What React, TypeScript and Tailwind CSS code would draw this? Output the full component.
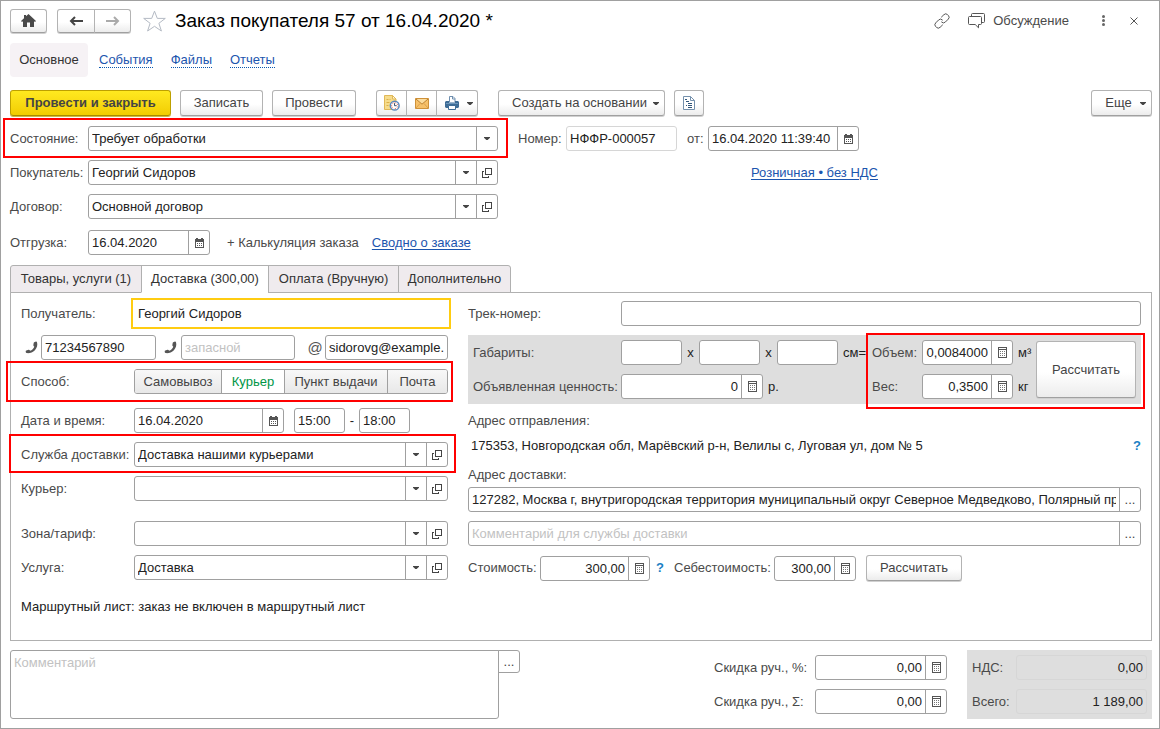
import { useId } from "react";
import type { ReactNode } from "react";

const BUTTON =
  "flex items-center justify-center rounded-[3px] border border-[#b3b3b3] border-b-[#a0a0a0] bg-linear-to-b from-white from-55% to-[#ececec] text-[#444] shadow-[0_1px_0_#d0d0d0]";
const CELL = "flex shrink-0 items-center justify-center text-[#444]";
const VALUE = "h-full w-full min-w-0 bg-transparent px-[3px] text-[#222] outline-none placeholder:text-[#c2c2c2]";

function Caret() {
  return (
    <svg width="6" height="3" viewBox="0 0 6 3" fill="currentColor" aria-hidden="true">
      <path d="M0 0h6v.8L3.600 3H2.400L0 .8z" />
    </svg>
  );
}

function OpenIcon() {
  return (
    <svg width="10" height="10" viewBox="0 0 10 10" fill="none" stroke="currentColor" shapeRendering="crispEdges" aria-hidden="true">
      <path d="M3.500 .5h6v6h-6zM2 3.500H.5v6h6V8" />
    </svg>
  );
}

function CalendarIcon() {
  return (
    <svg width="9" height="10" viewBox="0 0 9 10" shapeRendering="crispEdges" aria-hidden="true">
      <path fill="#555" d="M1 0h2v1h3V0h2v1h1v9H0V1h1z" />
      <path fill="#fff" d="M1 4h7v5H1z" />
      <path stroke="#555" strokeDasharray="1 1" d="M2 5.500h6M2 7.500h6" />
    </svg>
  );
}

function CalcIcon() {
  return (
    <svg width="9" height="11" viewBox="0 0 9 11" shapeRendering="crispEdges" aria-hidden="true">
      <path fill="none" stroke="#555" d="M.5 .5h8v10h-8zM1 2.500h7" />
      <path stroke="#777" strokeDasharray="1 1" d="M2 4.500h6M2 6.500h6M2 8.500h6" />
    </svg>
  );
}

function PhoneIcon() {
  return (
    <svg width="13" height="13" viewBox="0 0 13 13" fill="#555" aria-hidden="true">
      <path d="M9.200 1.200 11 .6q.7-.1 1 .7c.8 2.700 0 5.700-2.100 7.900C7.700 11.400 4.600 12.500 1.700 12.100q-.8-.1-.9-.8l-.1-1q0-.6.600-.8l2.200-.7q.6-.2 1 .3l.6.7c1.900-.7 3.500-2.200 4.200-4.100l-.7-.8q-.4-.5-.2-1.100l.3-1.900q.1-.5.500-.7z" />
    </svg>
  );
}

function Highlight({ className }: { className: string }) {
  return <div aria-hidden="true" className={`pointer-events-none absolute border-2 border-[#f00] ${className}`} />;
}

function Label({ id, className = "", children }: { id?: string; className?: string; children: ReactNode }) {
  return (
    <label htmlFor={id} className={`shrink-0 whitespace-nowrap text-[#4a4a4a] ${className}`}>
      {children}
    </label>
  );
}

interface FieldProps {
  id?: string;
  name?: string;
  value?: string;
  placeholder?: string;
  icon?: "calendar" | "calc" | "dots";
  numeric?: boolean;
  className: string;
}

const ICON_NAMES = { calendar: "Календарь", calc: "Калькулятор", dots: "Выбрать" };

function Field({ id, name, value = "", placeholder, icon, numeric, className }: FieldProps) {
  return (
    <div className={`flex h-[25px] overflow-hidden rounded-[3px] border border-[#a0a0a0] bg-white ${className}`}>
      <input
        id={id}
        aria-label={name}
        defaultValue={value}
        placeholder={placeholder}
        className={`${VALUE} ${numeric ? "text-right" : ""}`}
      />
      {icon && (
        <button type="button" aria-label={ICON_NAMES[icon]} className={`${CELL} w-[21px] border-l border-[#a0a0a0]`}>
          {icon === "calendar" && <CalendarIcon />}
          {icon === "calc" && <CalcIcon />}
          {icon === "dots" && "..."}
        </button>
      )}
    </div>
  );
}

function Combo({ id, value = "", open = true }: { id: string; value?: string; open?: boolean }) {
  return (
    <div className="flex h-[25px] min-w-0 flex-1 rounded-[3px] border border-[#a0a0a0] bg-white">
      <div className="grid min-w-0 flex-1 grid-cols-[1fr_21px]">
        <select id={id} defaultValue={value} className={`${VALUE} col-span-2 col-start-1 row-start-1 appearance-none`}>
          <option>{value}</option>
        </select>
        <span className={`${CELL} pointer-events-none col-start-2 row-start-1 border-l border-[#a0a0a0]`}>
          <Caret />
        </span>
      </div>
      {open && (
        <button type="button" aria-label="Открыть" className={`${CELL} w-[21px] border-l border-[#a0a0a0]`}>
          <OpenIcon />
        </button>
      )}
    </div>
  );
}

function ComboRow({ label, labelWidth, value, open, className = "", children }: {
  label: string;
  labelWidth: string;
  value?: string;
  open?: boolean;
  className?: string;
  children?: ReactNode;
}) {
  const id = useId();
  return (
    <div className={`relative flex items-center ${className}`}>
      <Label id={id} className={labelWidth}>{label}</Label>
      <Combo id={id} value={value} open={open} />
      {children}
    </div>
  );
}

function Header() {
  return (
    <header className="flex h-[25px] items-center">
      <button type="button" aria-label="Домой" className={`${BUTTON} h-6 w-[37px]`}>
        <svg width="15" height="13" viewBox="0 0 15 13" fill="#4a4a4a" aria-hidden="true">
          <path d="M7.500 0 15 7l-1 1-1-.8V13H9V8.500H6V13H2V7.200L1 8 0 7l3-2.800V1h2v1.300z" />
        </svg>
      </button>
      <div className="ml-[10px] flex">
        <button type="button" aria-label="Назад" className={`${BUTTON} h-6 w-[38px] rounded-r-none`}>
          <svg width="14" height="10" viewBox="0 0 14 10" fill="none" stroke="#444" strokeWidth="2" aria-hidden="true">
            <path d="M14 5H2M6 1 2 5l4 4" />
          </svg>
        </button>
        <button type="button" aria-label="Вперед" className={`${BUTTON} -ml-px h-6 w-[37px] rounded-l-none`}>
          <svg width="14" height="10" viewBox="0 0 14 10" fill="none" stroke="#aaa" strokeWidth="2" aria-hidden="true">
            <path d="M0 5h12M8 1l4 4-4 4" />
          </svg>
        </button>
      </div>
      <button type="button" aria-label="В избранное" className="ml-3">
        <svg width="23" height="22" viewBox="0 0 23 22" fill="none" stroke="#b4bac4" aria-hidden="true">
          <path d="m11.500 1.200 2.800 7.200h8l-6.400 4.900 2.500 7.700-6.900-4.700L4.600 21l2.500-7.700L.7 8.400h8z" />
        </svg>
      </button>
      <h1 className="ml-[9px] text-[19px] leading-6 text-black">Заказ покупателя 57 от 16.04.2020 *</h1>
      <div className="ml-auto flex items-center pr-[14px] text-[#4a4a4a]">
        <button type="button" aria-label="Получить ссылку">
          <svg width="16" height="16" viewBox="0 0 16 16" fill="none" stroke="#555" strokeLinecap="round" aria-hidden="true">
            <path d="M7.500 4 9.900 1.700a2.600 2.600 0 0 1 3.700 0l.7.7a2.600 2.600 0 0 1 0 3.700l-3 3a2.600 2.600 0 0 1-3.700 0M8.500 12l-2.400 2.300a2.600 2.600 0 0 1-3.700 0l-.7-.7a2.600 2.600 0 0 1 0-3.700l3-3a2.600 2.600 0 0 1 3.700 0" />
          </svg>
        </button>
        <button type="button" className="ml-[18px] flex items-center gap-2">
          <svg width="17" height="16" viewBox="0 0 17 16" fill="none" stroke="#555" aria-hidden="true">
            <path d="M3.500 3V1.500q0-1 1-1h11q1 0 1 1v7q0 1-1 1H14M1.500 3.500h11q1 0 1 1v6q0 1-1 1h-2v3.300l-3.300-3.300H1.500q-1 0-1-1v-6q0-1 1-1z" />
          </svg>
          Обсуждение
        </button>
        <button type="button" aria-label="Дополнительные действия" className="ml-[33px]">
          <svg width="3" height="11" viewBox="0 0 3 11" fill="#666" aria-hidden="true">
            <circle cx="1.500" cy="1.500" r="1.500" />
            <circle cx="1.500" cy="5.500" r="1.500" />
            <circle cx="1.500" cy="9.500" r="1.500" />
          </svg>
        </button>
        <button type="button" aria-label="Закрыть" className="ml-[25px]">
          <svg width="8" height="8" viewBox="0 0 8 8" stroke="#555" aria-hidden="true">
            <path d="m.5.5 7 7m0-7-7 7" />
          </svg>
        </button>
      </div>
    </header>
  );
}

function SectionNav() {
  const links = ["События", "Файлы", "Отчеты"];
  return (
    <nav className="mt-[10px] flex h-[34px] items-center">
      <span className="flex h-full w-[78px] items-center justify-center rounded-[4px] bg-[#f6f2f5] text-[#333]">Основное</span>
      <div className="ml-[11px] flex gap-[18px]">
        {links.map((text) => (
          <a key={text} href="#" className="border-b border-dotted border-[#0b57b0] leading-[14px] text-[#1c55ae]">
            {text}
          </a>
        ))}
      </div>
    </nav>
  );
}

function Toolbar() {
  return (
    <div className="mt-[13px] flex h-[26px]">
      <button
        type="button"
        className="w-[161px] rounded-[3px] border border-[#bda000] border-b-[#a58c00] bg-linear-to-b from-[#ffe91f] to-[#f2cd00] font-bold text-[#444] shadow-[0_1px_0_#d0b84a]"
      >
        Провести и закрыть
      </button>
      <button type="button" className={`${BUTTON} ml-[9px] w-[83px]`}>Записать</button>
      <button type="button" className={`${BUTTON} ml-[9px] w-[84px]`}>Провести</button>
      <div className="ml-5 flex">
        <button type="button" aria-label="Напоминание" className={`${BUTTON} w-[31px] rounded-r-none`}>
          <svg width="16" height="16" viewBox="0 0 16 16" aria-hidden="true">
            <path fill="#f6dc8c" stroke="#e0b858" d="M.5.500h8l3.500 3.500v10.500H.5z" />
            <path fill="#fff6d8" stroke="#e0b858" d="M8.500.5v3.500h3.500z" />
            <path stroke="#dcb04a" d="M2.500 4.500h2M5.500 4.500h1M2.500 7.500h3M2.500 10.500h2" />
            <circle cx="10.700" cy="10.700" r="4.400" fill="#fff" stroke="#5b88bd" strokeWidth="1.500" />
            <path fill="none" stroke="#e0492f" strokeDasharray="1 1.600" d="M10.700 7.700a3 3 0 1 1-.1 0" />
            <path fill="none" stroke="#3a4f6c" d="M10.500 8.200v2.500h2.200" />
          </svg>
        </button>
        <button type="button" aria-label="Отправить по почте" className={`${BUTTON} -ml-px w-[31px] rounded-none`}>
          <svg width="14" height="11" viewBox="0 0 14 11" aria-hidden="true">
            <path fill="#f6c069" stroke="#cf9138" d="M.5.500h13v10H.5z" />
            <path fill="#fbdc9e" d="M1 1h12L7 6.500z" />
            <path fill="none" stroke="#bd7f2c" d="m1 1 6 5.200L13 1" />
            <path stroke="#dba04b" d="m1 10 4-4.500M13 10 9 5.500" />
          </svg>
        </button>
        <button type="button" aria-label="Печать" className={`${BUTTON} -ml-px w-[42px] gap-2 rounded-l-none pl-1`}>
          <svg width="14" height="14" viewBox="0 0 14 14" aria-hidden="true">
            <path fill="#fff" stroke="#6f8faf" d="M4.500 6V.5h3.500l2 2V6" />
            <path fill="none" stroke="#6f8faf" d="M7.500.5v2.500H10" />
            <path fill="#3f6d96" d="M1 5h3v1.500h6V5h3l1 1v5l-1 1H1l-1-1V6z" />
            <path fill="#6d96bb" d="M1 7h12v1H1z" />
            <path fill="#fff" stroke="#3f6d96" d="M3.500 9.500h7v4h-7z" />
          </svg>
          <Caret />
        </button>
      </div>
      <button type="button" className={`${BUTTON} ml-5 w-[167px] gap-[6px] pl-2`}>
        Создать на основании
        <Caret />
      </button>
      <button type="button" aria-label="Отчет" className={`${BUTTON} ml-[9px] w-[30px]`}>
        <svg width="12" height="14" viewBox="0 0 12 14" aria-hidden="true">
          <path fill="#fff" stroke="#7591ad" d="M.5.500h7l4 4v9H.5z" />
          <path fill="none" stroke="#7591ad" d="M7.500.5v4h4" />
          <path stroke="#33577b" d="M2 3.500h2M3 5.500h3M5 7.500h4M3 9.500h1M5 9.500h4M5 11.500h4" />
        </svg>
      </button>
      <button type="button" className={`${BUTTON} ml-auto w-[61px] gap-2 pl-2`}>
        Еще
        <Caret />
      </button>
    </div>
  );
}

function OrderFields() {
  const label = "w-[78px]";
  return (
    <>
      <div className="mt-[10px] flex gap-5">
        <div className="flex w-[488px] shrink-0 flex-col gap-[9px]">
          <ComboRow label="Состояние:" labelWidth={label} value="Требует обработки" open={false}>
            <Highlight className="-top-2 -right-[10px] -bottom-[7px] -left-[7px]" />
          </ComboRow>
          <ComboRow label="Покупатель:" labelWidth={label} value="Георгий Сидоров" />
          <ComboRow label="Договор:" labelWidth={label} value="Основной договор" />
        </div>
        <div className="flex flex-col gap-[9px]">
          <div className="flex items-center">
            <Label id="number" className="w-12">Номер:</Label>
            <input
              id="number"
              defaultValue="НФФР-000057"
              className="h-[25px] w-[111px] rounded-[3px] border border-[#d6d6d6] px-[3px] text-[#222]"
            />
            <Label id="date" className="ml-[10px] w-[21px]">от:</Label>
            <Field id="date" value="16.04.2020 11:39:40" icon="calendar" className="w-[151px]" />
          </div>
          <div className="flex h-[25px] items-center pl-[233px]">
            <a href="#" className="whitespace-nowrap text-[#1c55ae] underline underline-offset-2">Розничная • без НДС</a>
          </div>
        </div>
      </div>
      <div className="mt-[11px] flex items-center">
        <Label id="ship" className={label}>Отгрузка:</Label>
        <Field id="ship" value="16.04.2020" icon="calendar" className="w-[122px]" />
        <button type="button" className="ml-[17px] text-[#4a4a4a]">+ Калькуляция заказа</button>
        <a href="#" className="ml-[13px] text-[#1c55ae] underline underline-offset-2">Сводно о заказе</a>
      </div>
    </>
  );
}

function Tabs() {
  const tab = "-mr-px h-[28px] border border-[#b0b0b0] text-[#333] first:rounded-tl-[3px] last:rounded-tr-[3px]";
  return (
    <div role="tablist" className="relative mt-[10px] -mb-px flex">
      <button role="tab" type="button" className={`${tab} w-[132px] bg-[#efebee]`}>Товары, услуги (1)</button>
      <button role="tab" type="button" aria-selected="true" className={`${tab} w-[128px] border-b-white bg-white`}>Доставка (300,00)</button>
      <button role="tab" type="button" className={`${tab} w-[131px] bg-[#efebee]`}>Оплата (Вручную)</button>
      <button role="tab" type="button" className={`${tab} w-[113px] bg-[#efebee]`}>Дополнительно</button>
    </div>
  );
}

function DeliveryLeft() {
  const label = "w-[113px]";
  const method = "h-full border-[#a0a0a0] bg-linear-to-b from-[#f8f8f8] to-[#e8e8e8] text-[#444]";
  return (
    <div className="flex w-[427px] shrink-0 flex-col">
      <div className="flex h-[25px] items-center">
        <Label id="recipient" className="w-[110px]">Получатель:</Label>
        <input
          id="recipient"
          defaultValue="Георгий Сидоров"
          className="-my-[3px] -mr-[3px] h-[31px] min-w-0 flex-1 border-2 border-[#fc1] px-[5px] text-[#222] outline-none"
        />
      </div>
      <div className="mt-[9px] flex items-center">
        <span className="flex w-5 justify-center"><PhoneIcon /></span>
        <Field name="Телефон" value="71234567890" className="w-[115px]" />
        <span className="flex w-[25px] justify-center pl-1"><PhoneIcon /></span>
        <Field name="Запасной телефон" placeholder="запасной" className="w-[114px]" />
        <span className="w-[30px] pl-[10px] text-center text-[15px] text-[#555]">@</span>
        <Field name="Эл. почта" value="sidorovg@example.ru" className="min-w-0 flex-1" />
      </div>
      <div className="relative mt-[9px] flex items-center">
        <span className={`${label} shrink-0 text-[#4a4a4a]`}>Способ:</span>
        <div className="flex h-[25px] flex-1 overflow-hidden rounded-[3px] border border-[#a0a0a0]">
          <button type="button" className={`${method} w-[86px]`}>Самовывоз</button>
          <button type="button" aria-pressed="true" className="h-full w-16 border-x border-[#a0a0a0] bg-white text-[#009646]">Курьер</button>
          <button type="button" className={`${method} w-[102px]`}>Пункт выдачи</button>
          <button type="button" className={`${method} flex-1 border-l`}>Почта</button>
        </div>
        <Highlight className="-top-2 -right-[5px] -bottom-2 -left-[15px]" />
      </div>
      <div className="mt-[14px] flex items-center">
        <Label id="dday" className={label}>Дата и время:</Label>
        <Field id="dday" value="16.04.2020" icon="calendar" className="w-[150px]" />
        <Field name="Время с" value="15:00" className="ml-[10px] w-[51px]" />
        <span className="w-[14px] text-center">-</span>
        <Field name="Время по" value="18:00" className="w-[51px]" />
      </div>
      <ComboRow label="Служба доставки:" labelWidth={label} value="Доставка нашими курьерами" className="mt-[9px]">
        <Highlight className="-top-2 -right-2 -bottom-[6px] -left-3" />
      </ComboRow>
      <ComboRow label="Курьер:" labelWidth={label} className="mt-[9px]" />
      <ComboRow label="Зона/тариф:" labelWidth={label} className="mt-5" />
      <ComboRow label="Услуга:" labelWidth={label} value="Доставка" className="mt-[9px]" />
      <p className="mt-[14px] h-[25px] leading-[25px] text-[#222]">Маршрутный лист: заказ не включен в маршрутный лист</p>
    </div>
  );
}

function DeliveryRight() {
  return (
    <div className="flex min-w-0 flex-1 flex-col">
      <div className="flex items-center">
        <Label id="track" className="w-[153px]">Трек-номер:</Label>
        <Field id="track" className="flex-1" />
      </div>
      <div className="mt-[9px] flex justify-between bg-[#dedede] p-[5px]">
        <div className="flex flex-col gap-[9px]">
          <div className="flex items-center">
            <Label id="dim" className="w-[148px]">Габариты:</Label>
            <Field id="dim" className="w-[61px]" />
            <span className="w-[17px] text-center">x</span>
            <Field name="Ширина" className="w-[61px]" />
            <span className="w-[17px] text-center">x</span>
            <Field name="Высота" className="w-[61px]" />
            <span className="pl-[5px]">см=</span>
          </div>
          <div className="flex items-center">
            <Label id="declared" className="w-[148px]">Объявленная ценность:</Label>
            <Field id="declared" value="0" numeric icon="calc" className="w-[142px]" />
            <span className="pl-[5px]">р.</span>
          </div>
        </div>
        <div className="relative flex">
          <div className="flex flex-col gap-[9px]">
            <div className="flex items-center">
              <Label id="volume" className="w-[50px]">Объем:</Label>
              <Field id="volume" value="0,0084000" numeric icon="calc" className="w-[91px]" />
              <span className="w-[23px] pl-[5px]">м³</span>
            </div>
            <div className="flex items-center">
              <Label id="weight" className="w-[50px]">Вес:</Label>
              <Field id="weight" value="0,3500" numeric icon="calc" className="w-[91px]" />
              <span className="w-[23px] pl-[5px]">кг</span>
            </div>
          </div>
          <button type="button" className={`${BUTTON} my-px w-[100px]`}>Рассчитать</button>
          <Highlight className="-top-[7px] -right-[9px] -bottom-[10px] -left-[6px]" />
        </div>
      </div>
      <p className="mt-[5px] leading-6 text-[#4a4a4a]">Адрес отправления:</p>
      <div className="mt-px flex justify-between pl-[3px] leading-6">
        <p>175353, Новгородская обл, Марёвский р-н, Велилы с, Луговая ул, дом № 5</p>
        <button type="button" aria-label="Справка" className="font-bold text-[#1b7fc4]">?</button>
      </div>
      <Label id="address" className="mt-[5px] leading-6">Адрес доставки:</Label>
      <Field
        id="address"
        value="127282, Москва г, внутригородская территория муниципальный округ Северное Медведково, Полярный проезд"
        icon="dots"
        className=""
      />
      <Field name="Комментарий для службы доставки" placeholder="Комментарий для службы доставки" icon="dots" className="mt-[9px]" />
      <div className="mt-[9px] flex h-[26px] items-center">
        <Label id="cost" className="w-[72px]">Стоимость:</Label>
        <Field id="cost" value="300,00" numeric icon="calc" className="w-[110px]" />
        <button type="button" aria-label="Справка" className="w-5 font-bold text-[#1b7fc4]">?</button>
        <Label id="prime" className="ml-1 w-[100px]">Себестоимость:</Label>
        <Field id="prime" value="300,00" numeric icon="calc" className="w-[82px]" />
        <button type="button" className={`${BUTTON} ml-[10px] h-full w-24`}>Рассчитать</button>
      </div>
    </div>
  );
}

function Footer() {
  const total = "h-[25px] w-[131px] rounded-[3px] border border-[#d6d6d6] bg-transparent px-[3px] text-right text-[#222]";
  return (
    <footer className="mt-[9px] flex h-[69px] items-stretch">
      <textarea
        aria-label="Комментарий"
        placeholder="Комментарий"
        className="w-[489px] resize-none rounded-[3px] rounded-tr-none border border-[#a0a0a0] px-[3px] py-1 leading-4 placeholder:text-[#c2c2c2]"
      />
      <button type="button" aria-label="Выбрать" className={`${CELL} -ml-px h-[23px] w-[22px] rounded-r-[3px] border border-[#a0a0a0]`}>...</button>
      <div className="ml-auto flex flex-col justify-center gap-[9px]">
        <div className="flex items-center">
          <Label id="dpercent" className="w-[101px]">Скидка руч., %:</Label>
          <Field id="dpercent" value="0,00" numeric icon="calc" className="w-[132px]" />
        </div>
        <div className="flex items-center">
          <Label id="dsum" className="w-[101px]">Скидка руч., Σ:</Label>
          <Field id="dsum" value="0,00" numeric icon="calc" className="w-[132px]" />
        </div>
      </div>
      <div className="ml-5 flex flex-col justify-center gap-[9px] bg-[#dedede] px-[5px]">
        <div className="flex items-center">
          <Label id="vat" className="w-11">НДС:</Label>
          <input id="vat" readOnly value="0,00" className={total} />
        </div>
        <div className="flex items-center">
          <Label id="total" className="w-11">Всего:</Label>
          <input id="total" readOnly value="1 189,00" className={total} />
        </div>
      </div>
    </footer>
  );
}

export default function App() {
  return (
    <main className="min-h-screen border border-[#a0a0a0] bg-white pt-[7px] pr-[7px] pb-[9px] pl-[9px] font-['Liberation_Sans',Arial,sans-serif] text-[13px] leading-4 text-[#222]">
      <Header />
      <SectionNav />
      <Toolbar />
      <OrderFields />
      <Tabs />
      <section className="flex gap-5 border border-[#b0b0b0] px-[10px] pt-2 pb-[21px]">
        <DeliveryLeft />
        <DeliveryRight />
      </section>
      <Footer />
    </main>
  );
}
